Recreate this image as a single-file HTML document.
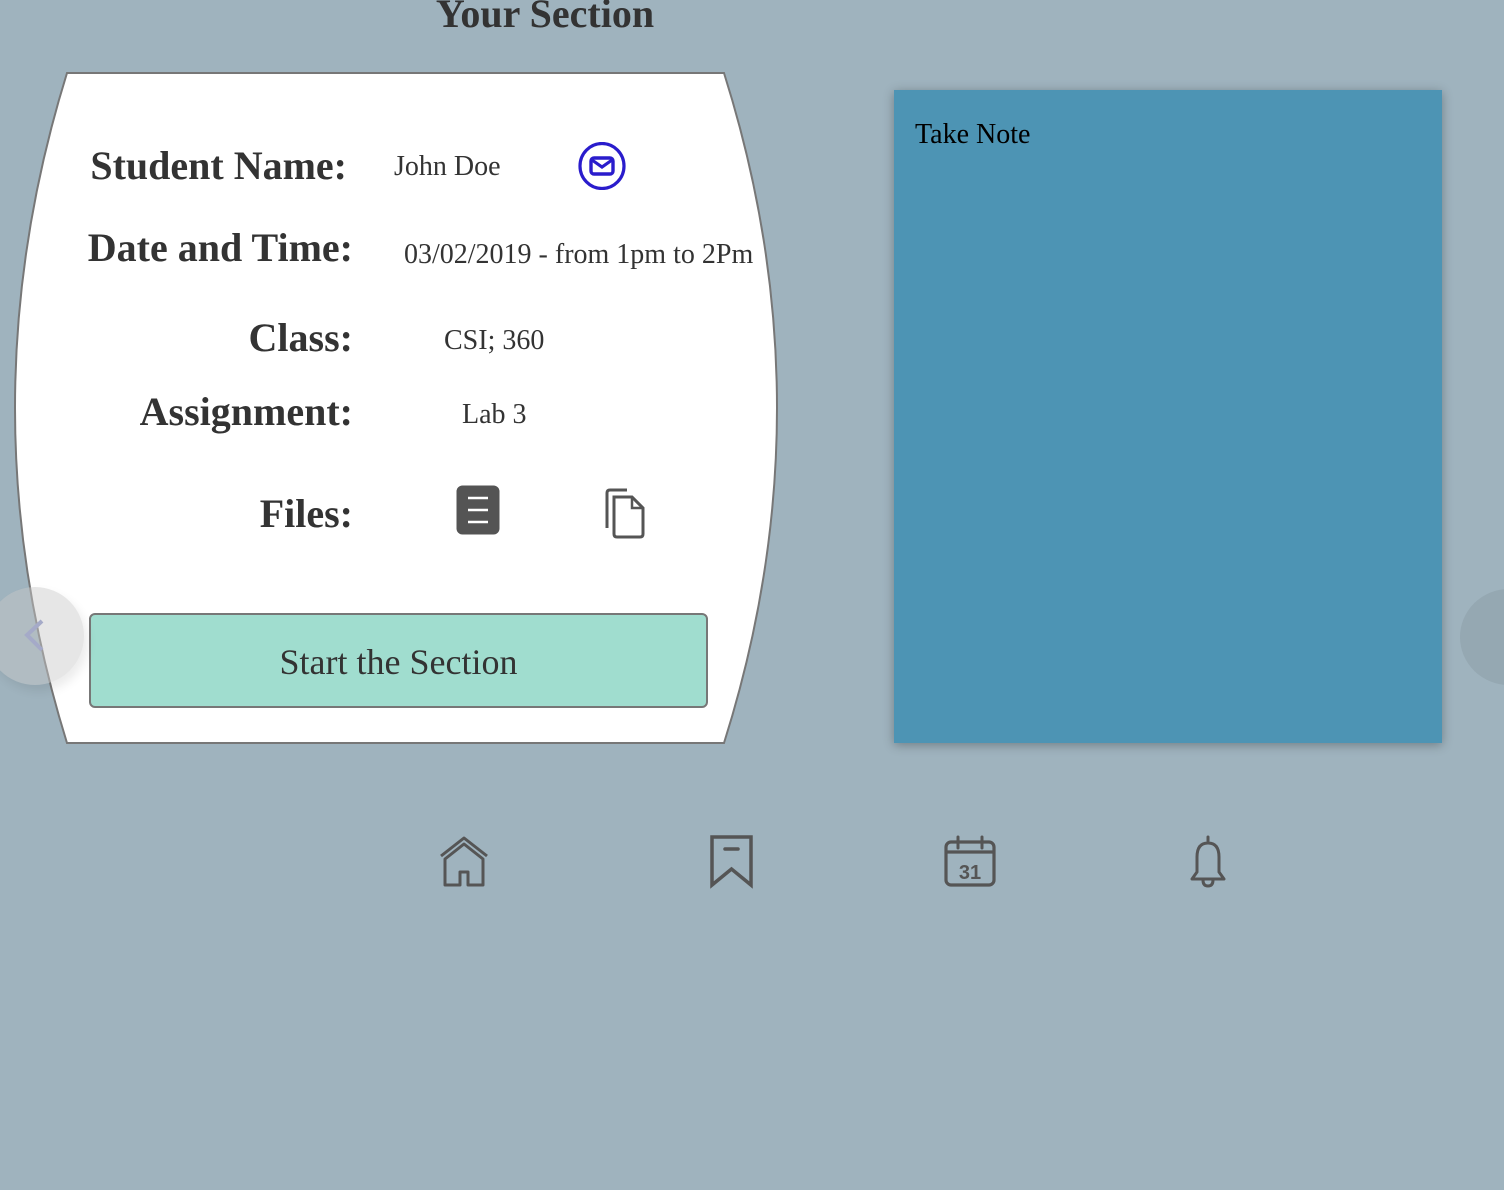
<!DOCTYPE html>
<html><head><meta charset="utf-8">
<style>
html,body{margin:0;padding:0;}
body{width:1504px;height:1190px;background:#9fb3be;position:relative;overflow:hidden;font-family:"Liberation Serif",serif;color:#333;}
.a{position:absolute;white-space:nowrap;line-height:1;}
.lab{font-weight:bold;font-size:40px;}
.val{font-size:28px;}
</style></head><body>
<div class="a lab" style="left:0;width:1090px;text-align:center;top:-6px;">Your Section</div>

<svg class="a" style="left:0;top:0" width="900" height="760">
<path d="M67,73 L724,73 Q830,408 724,743 L67,743 Q-37,408 67,73 Z" fill="#fff" stroke="#777" stroke-width="2"/>
</svg>

<div class="a lab" style="right:1157px;top:146px;">Student Name:</div>
<div class="a lab" style="right:1151px;top:228px;">Date and Time:</div>
<div class="a lab" style="right:1151px;top:318px;">Class:</div>
<div class="a lab" style="right:1151px;top:392px;">Assignment:</div>
<div class="a lab" style="right:1151px;top:494px;">Files:</div>

<div class="a val" style="left:394px;top:153px;">John Doe</div>
<div class="a val" style="left:404px;top:241px;">03/02/2019 - from 1pm to 2Pm</div>
<div class="a val" style="left:444px;top:327px;">CSI; 360</div>
<div class="a val" style="left:462px;top:401px;">Lab 3</div>

<svg class="a" style="left:578px;top:142px" width="48" height="48" viewBox="0 0 48 48">
<ellipse cx="24" cy="24" rx="22" ry="22.5" fill="none" stroke="#2a1ccc" stroke-width="3.2"/>
<rect x="13" y="16" width="22" height="16" rx="3" fill="none" stroke="#2a1ccc" stroke-width="3.4"/>
<path d="M14 18 L24 25 L34 18" fill="none" stroke="#2a1ccc" stroke-width="3.2"/>
</svg>

<svg class="a" style="left:456px;top:485px" width="44" height="50" viewBox="0 0 44 50">
<rect x="0.5" y="0.5" width="43" height="49" rx="6" fill="#545454"/>
<path d="M12 13 H32 M12 25 H32 M12 37 H32" stroke="#fff" stroke-width="2.5"/>
</svg>
<svg class="a" style="left:605px;top:488px" width="42" height="52" viewBox="0 0 42 52">
<path d="M22 2 H5 Q2 2 2 5 V40" fill="none" stroke="#555" stroke-width="3"/>
<path d="M9 9 H27 L38 20 V46 Q38 49 35 49 H12 Q9 49 9 46 Z" fill="none" stroke="#555" stroke-width="3"/>
<path d="M27 9 V20 H38" fill="none" stroke="#555" stroke-width="2.5"/>
</svg>

<div class="a" style="left:89px;top:613px;width:615px;height:91px;background:#a0ddcf;border:2px solid #777;border-radius:6px;"></div>
<div class="a" style="left:89px;width:619px;text-align:center;top:644px;font-size:36px;color:#333;">Start the Section</div>

<div class="a" style="left:-14px;top:587px;width:98px;height:98px;border-radius:50%;background:rgba(200,200,200,0.45);box-shadow:4px 6px 10px rgba(0,0,0,0.08);"></div>
<svg class="a" style="left:22px;top:618px" width="24" height="36"><path d="M20 3 L5 17 L20 32" fill="none" stroke="#a5aac8" stroke-width="4"/></svg>
<div class="a" style="left:1460px;top:589px;width:98px;height:96px;border-radius:50%;background:rgba(140,158,168,0.55);"></div>

<div class="a" style="left:894px;top:90px;width:548px;height:653px;background:#4d94b4;box-shadow:0 2px 10px rgba(0,0,0,0.3);"></div>
<div class="a" style="left:915px;top:121px;font-size:28px;color:#000;">Take Note</div>

<svg class="a" style="left:435px;top:833px" width="60" height="56" viewBox="0 0 60 56">
<g fill="none" stroke="#555" stroke-width="3" stroke-linejoin="round">
<path d="M6 16 L29 -2 L52 16" transform="translate(0,7)"/>
<path d="M10 52 V26 L29 11 L48 26 V52 H33 V39 H25 V52 Z"/>
</g></svg>
<svg class="a" style="left:708px;top:834px" width="48" height="56" viewBox="0 0 48 56">
<path d="M4 3 H43 V51 L23.5 35 L4 51 Z" fill="none" stroke="#555" stroke-width="3.5" stroke-linejoin="miter"/>
<path d="M17 15 H30" stroke="#555" stroke-width="3.5" stroke-linecap="round"/>
</svg>
<svg class="a" style="left:943px;top:834px" width="56" height="56" viewBox="0 0 56 56">
<rect x="3" y="8" width="48" height="43" rx="5" fill="none" stroke="#555" stroke-width="3.2"/>
<path d="M3 18 H51" stroke="#555" stroke-width="3.2"/>
<path d="M15 3 V14 M39 3 V14" stroke="#555" stroke-width="3" stroke-linecap="round"/>
<text x="27" y="45" text-anchor="middle" font-family="Liberation Sans,sans-serif" font-weight="bold" font-size="20" fill="#555">31</text>
</svg>
<svg class="a" style="left:1184px;top:834px" width="48" height="56" viewBox="0 0 48 56">
<path d="M24 3 V8 M8 45 L13 38 V23 Q13 9 24 9 Q35 9 35 23 V38 L40 45 Z" fill="none" stroke="#555" stroke-width="3" stroke-linejoin="round" stroke-linecap="round"/>
<path d="M19 46 Q19 52 24 52 Q29 52 29 46" fill="none" stroke="#555" stroke-width="3"/>
</svg>
</body></html>
